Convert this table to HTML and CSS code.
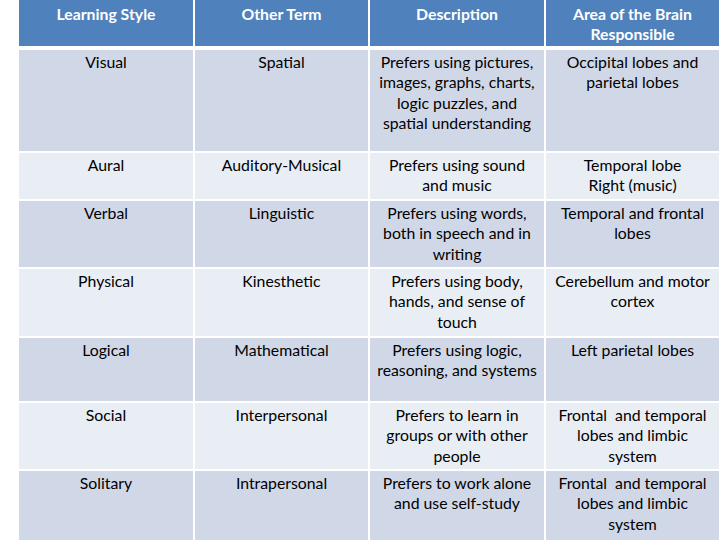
FILE: index.html
```html
<!DOCTYPE html>
<html>
<head>
<meta charset="utf-8">
<link rel="stylesheet" href="styles.css">
</head>
<body>
<div class="table">
  <div class="row head">
    <div class="cell">Learning Style</div>
    <div class="cell">Other Term</div>
    <div class="cell">Description</div>
    <div class="cell">Area of the Brain<br>Responsible</div>
  </div>
  <div class="row dark r1">
    <div class="cell">Visual</div>
    <div class="cell">Spatial</div>
    <div class="cell">Prefers using pictures,<br>images, graphs, charts,<br>logic puzzles, and<br>spatial understanding</div>
    <div class="cell">Occipital lobes and<br>parietal lobes</div>
  </div>
  <div class="row light r2">
    <div class="cell">Aural</div>
    <div class="cell">Auditory-Musical</div>
    <div class="cell">Prefers using sound<br>and music</div>
    <div class="cell">Temporal lobe<br>Right (music)</div>
  </div>
  <div class="row dark r3">
    <div class="cell">Verbal</div>
    <div class="cell">Linguistic</div>
    <div class="cell">Prefers using words,<br>both in speech and in<br>writing</div>
    <div class="cell">Temporal and frontal<br>lobes</div>
  </div>
  <div class="row light r4">
    <div class="cell">Physical</div>
    <div class="cell">Kinesthetic</div>
    <div class="cell">Prefers using body,<br>hands, and sense of<br>touch</div>
    <div class="cell">Cerebellum and motor<br>cortex</div>
  </div>
  <div class="row dark r5">
    <div class="cell">Logical</div>
    <div class="cell">Mathematical</div>
    <div class="cell">Prefers using logic,<br>reasoning, and systems</div>
    <div class="cell">Left parietal lobes</div>
  </div>
  <div class="row light r6">
    <div class="cell">Social</div>
    <div class="cell">Interpersonal</div>
    <div class="cell">Prefers to learn in<br>groups or with other<br>people</div>
    <div class="cell">Frontal&nbsp; and temporal<br>lobes and limbic<br>system</div>
  </div>
  <div class="row dark r7">
    <div class="cell">Solitary</div>
    <div class="cell">Intrapersonal</div>
    <div class="cell">Prefers to work alone<br>and use self-study</div>
    <div class="cell">Frontal&nbsp; and temporal<br>lobes and limbic<br>system</div>
  </div>
</div>
</body>
</html>
```

FILE: styles.css
```css
html, body {
  margin: 0;
  padding: 0;
  background: #ffffff;
  overflow: hidden;
}
body {
  font-family: "Lato", "Open Sans", sans-serif;
  font-size: 15.8px;
  line-height: 20.3px;
  color: #000;
}
.table {
  width: 700px;
  margin-left: 19px;
  display: flex;
  flex-direction: column;
  gap: 2px;
}
.row {
  display: grid;
  grid-template-columns: 174px 173px 174px 173px;
  column-gap: 2px;
}
.cell {
  text-align: center;
  padding-top: 2px;
}
.head {
  height: 46px;
  margin-bottom: 2px;
}
.head .cell {
  background: #4f81bd;
  color: #ffffff;
  font-weight: bold;
  padding-top: 4px;
}
.dark .cell { background: #d0d8e8; }
.light .cell { background: #e9edf4; }
.r1 { height: 101px; }
.r2 { height: 46px; }
.r3 { height: 66px; }
.r4 { height: 67px; }
.r5 { height: 63px; }
.r6 { height: 66px; }
.r7 { height: 69px; }
```
